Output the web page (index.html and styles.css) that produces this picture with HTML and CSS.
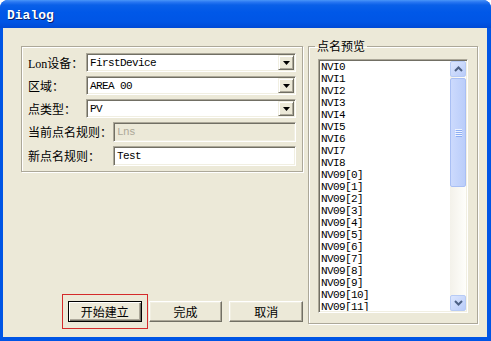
FILE: index.html
```html
<!DOCTYPE HTML>
<html>
  <head>
    <meta http-equiv="Content-type" content="text/html;charset=UTF-8">
    <title>Dialog</title>
    <link rel="stylesheet" href="styles.css">
  </head>
  <body>
    <div class="window">
      <div class="titlebar"><span class="title">Dialog</span></div>
      <div class="client">
        <div class="left">
          <div class="group">
            <div class="row combo-row">
              <span class="label">Lon设备：</span>
              <div class="combo">
                <span class="value">FirstDevice</span>
                <span class="drop"><svg width="7" height="4" viewBox="0 0 7 4"><polygon points="0,0 7,0 3.5,4" fill="#000"/></svg></span>
              </div>
            </div>
            <div class="row combo-row">
              <span class="label">区域：</span>
              <div class="combo">
                <span class="value">AREA 00</span>
                <span class="drop"><svg width="7" height="4" viewBox="0 0 7 4"><polygon points="0,0 7,0 3.5,4" fill="#000"/></svg></span>
              </div>
            </div>
            <div class="row combo-row">
              <span class="label">点类型：</span>
              <div class="combo">
                <span class="value">PV</span>
                <span class="drop"><svg width="7" height="4" viewBox="0 0 7 4"><polygon points="0,0 7,0 3.5,4" fill="#000"/></svg></span>
              </div>
            </div>
            <div class="row edit-row">
              <span class="label">当前点名规则：</span>
              <div class="edit disabled"><span class="value">Lns</span></div>
            </div>
            <div class="row edit-row">
              <span class="label">新点名规则：</span>
              <div class="edit"><span class="value">Test</span></div>
            </div>
          </div>
          <div class="buttons">
            <button class="btn default focus">开始建立</button>
            <button class="btn">完成</button>
            <button class="btn">取消</button>
          </div>
        </div>
        <fieldset class="preview">
          <legend>点名预览</legend>
          <div class="listbox">
            <ul class="items">
              <li>NVI0</li>
              <li>NVI1</li>
              <li>NVI2</li>
              <li>NVI3</li>
              <li>NVI4</li>
              <li>NVI5</li>
              <li>NVI6</li>
              <li>NVI7</li>
              <li>NVI8</li>
              <li>NV09[0]</li>
              <li>NV09[1]</li>
              <li>NV09[2]</li>
              <li>NV09[3]</li>
              <li>NV09[4]</li>
              <li>NV09[5]</li>
              <li>NV09[6]</li>
              <li>NV09[7]</li>
              <li>NV09[8]</li>
              <li>NV09[9]</li>
              <li>NV09[10]</li>
              <li>NV09[11]</li>
            </ul>
            <div class="scrollbar">
              <div class="arrow"><svg width="9" height="6" viewBox="0 0 9 6"><polyline points="1,5 4.5,1.5 8,5" fill="none" stroke="#4D6185" stroke-width="2"/></svg></div>
              <div class="track">
                <div class="thumb"><svg width="7" height="8" viewBox="0 0 7 8"><path d="M0 0.5h7M0 2.5h7M0 4.5h7M0 6.5h7" stroke="#EEF3FE" stroke-width="1"/><path d="M1 1.5h7M1 3.5h7M1 5.5h7M1 7.5h7" stroke="#8DAEF3" stroke-width="1"/></svg></div>
              </div>
              <div class="arrow"><svg width="9" height="6" viewBox="0 0 9 6"><polyline points="1,1 4.5,4.5 8,1" fill="none" stroke="#4D6185" stroke-width="2"/></svg></div>
            </div>
          </div>
        </fieldset>
      </div>
    </div>
  </body>
</html>
```

FILE: styles.css
```css
* {
box-sizing: border-box;
}
html, body {
margin: 0;
background: #fff;
}
body {
font-family: "Noto Sans CJK SC", sans-serif;
font-size: 12px;
color: #000;
}
.window {
width: 491px;
height: 341px;
display: flex;
flex-direction: column;
background: #0055E5;
border-radius: 8px 8px 0 0;
overflow: hidden;
}
.titlebar {
height: 28px;
flex: none;
display: flex;
align-items: center;
padding: 3px 0 0 7px;
background: linear-gradient(#4A96F8 0, #2A77F2 2px, #0A60E8 5px, #0058E8 12px, #0055E5 22px, #004AD6 28px);
}
.title {
font: bold 13px "Liberation Mono", monospace;
color: #fff;
text-shadow: 1px 1px 0 #0A1E6E;
}
.client {
flex: 1;
margin: 0 4px 4px 3px;
background: #ECE9D8;
display: flex;
padding: 11px 0 13px 18px;
}
.left {
width: 282px;
display: flex;
flex-direction: column;
padding-top: 7px;
}
.group {
height: 126px;
border: 1px solid #ACA899;
box-shadow: inset 1px 1px 0 #fff, 1px 1px 0 #fff;
padding: 6px 6px 5px 6px;
}
.row {
display: flex;
align-items: center;
margin-bottom: 4px;
}
.row:last-child {
margin-bottom: 0;
}
.combo-row {
height: 19px;
}
.edit-row {
height: 20px;
}
.label {
flex: none;
width: 58px;
white-space: nowrap;
font-family: "Liberation Serif", "Noto Sans CJK SC", serif;
}
.edit-row .label {
width: 85px;
}
.combo, .edit {
flex: 1;
height: 100%;
display: flex;
align-items: center;
background: #fff;
border: 1px solid;
border-color: #ACA899 #fff #fff #ACA899;
box-shadow: inset 1px 1px 0 #716F64, inset -1px -1px 0 #F1EFE2;
padding: 1px;
}
.edit.disabled {
background: #ECE9D8;
color: #ACA899;
}
.value {
padding-left: 2px;
font: 11px "Liberation Mono", monospace;
letter-spacing: -0.6px;
}
.drop {
margin-left: auto;
width: 16px;
height: 15px;
display: flex;
align-items: center;
justify-content: center;
background: #ECE9D8;
border: 1px solid;
border-color: #F1EFE2 #716F64 #716F64 #F1EFE2;
box-shadow: inset 1px 1px 0 #fff, inset -1px -1px 0 #ACA899;
}
.buttons {
margin-top: auto;
margin-bottom: 2px;
display: flex;
gap: 7px;
padding-left: 47px;
}
.btn {
position: relative;
width: 74px;
height: 21px;
padding: 0;
font: 12px "Noto Sans CJK SC", sans-serif;
color: #000;
background: #ECE9D8;
border: 1px solid;
border-color: #fff #716F64 #716F64 #fff;
box-shadow: inset -1px -1px 0 #ACA899, inset 1px 1px 0 #F1EFE2;
}
.btn.default {
border-color: #000;
box-shadow: inset 1px 1px 0 #fff, inset -1px -1px 0 #716F64, inset -2px -2px 0 #ACA899;
}
.btn.focus::after {
content: "";
position: absolute;
left: -7px;
top: -8px;
right: -7px;
bottom: -8px;
border: 1px solid #D42A2A;
}
.preview {
margin: 0 0 0 5px;
width: 170px;
min-width: 0;
padding: 0 9px 0 9px;
border: 1px solid #ACA899;
box-shadow: inset 1px 1px 0 #fff, 1px 1px 0 #fff;
}
.preview legend {
margin-left: -3px;
padding: 0 2px;
line-height: 14px;
font-size: 12px;
}
.listbox {
margin-top: 6px;
height: 254px;
display: flex;
background: #fff;
border: 1px solid;
border-color: #ACA899 #fff #fff #ACA899;
box-shadow: inset 1px 1px 0 #716F64, inset -1px -1px 0 #F1EFE2;
padding: 1px;
}
.items {
flex: 1;
margin: 0;
padding: 0 0 0 1px;
list-style: none;
overflow: hidden;
font: 11px "Liberation Mono", monospace;
letter-spacing: -0.6px;
line-height: 12px;
}
.scrollbar {
width: 16px;
flex: none;
display: flex;
flex-direction: column;
background: linear-gradient(to right, #F3F1EA, #FEFEFB);
}
.arrow {
height: 16px;
flex: none;
display: flex;
align-items: center;
justify-content: center;
border: 1px solid #B7CBF5;
border-radius: 2px;
background: linear-gradient(135deg, #DCE6FE, #B9CCF9);
}
.track {
flex: 1;
}
.thumb {
height: 109px;
margin-top: 1px;
display: flex;
align-items: center;
justify-content: center;
border: 1px solid #A9BFF4;
border-radius: 2px;
background: linear-gradient(to right, #CCDAFD, #BACDFA);
}
```
